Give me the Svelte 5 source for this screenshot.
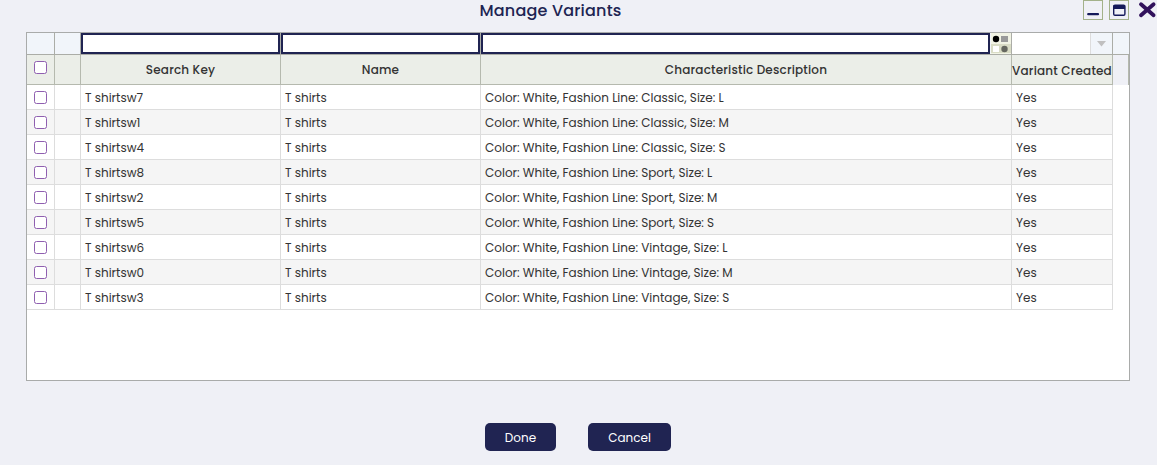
<script>
  const rows = [
    ['7', 'Classic', 'L'],
    ['1', 'Classic', 'M'],
    ['4', 'Classic', 'S'],
    ['8', 'Sport', 'L'],
    ['2', 'Sport', 'M'],
    ['5', 'Sport', 'S'],
    ['6', 'Vintage', 'L'],
    ['0', 'Vintage', 'M'],
    ['3', 'Vintage', 'S']
  ];
</script>

<div class="dialog">
  <header>
    <h1>Manage Variants</h1>
    <div class="controls">
      <button class="box" aria-label="Minimize">
        <svg width="18" height="18" viewBox="0 0 18 18"><path d="M4.2 13.2h9.8" stroke="#14195a" stroke-width="2.2" stroke-linecap="round" /></svg>
      </button>
      <button class="box" aria-label="Maximize">
        <svg width="18" height="18" viewBox="0 0 18 18"><rect x="3.7" y="4.2" width="11.2" height="10" rx="1.3" fill="#eff0f6" stroke="#14195a" stroke-width="1.4" /><path d="M3.5 4h11.6v4h-11.6z" fill="#14195a" /></svg>
      </button>
      <button class="close" aria-label="Close">
        <svg width="20" height="20" viewBox="0 0 20 20"><path d="M4 4.2L16.6 15.2M16.6 4.2L4 15.2" stroke="#32125c" stroke-width="3.8" stroke-linecap="round" /></svg>
      </button>
    </div>
  </header>

  <div class="grid">
    <div class="line filters">
      <div></div>
      <div></div>
      <div><span class="input"></span></div>
      <div><span class="input"></span></div>
      <div>
        <span class="input"></span>
        <svg class="picker" width="21" height="21" viewBox="0 0 21 21">
          <rect x="1" width="20" height="21" fill="#f1f3e4" />
          <rect x="1" y="11" width="20" height="9" fill="#d9dcc5" />
          <circle cx="6" cy="6" r="3.2" fill="#000" />
          <rect x="11" y="3" width="7" height="6" fill="#999" />
          <rect x="3" y="13" width="6" height="6" fill="#fff" />
          <circle cx="14.5" cy="16" r="3.2" fill="#65675f" />
        </svg>
      </div>
      <div>
        <span class="select"></span>
        <svg class="arrow" width="21" height="21" viewBox="0 0 21 21"><path d="M6 8h9l-4.5 5.5z" fill="#c0c0c0" /></svg>
      </div>
      <div class="edge"></div>
    </div>

    <div class="line heads">
      <div class="check"><i></i></div>
      <div></div>
      <div><b>Search Key</b></div>
      <div><b>Name</b></div>
      <div><b>Characteristic Description</b></div>
      <div><b class="last">Variant Created</b></div>
      <div class="edge"></div>
    </div>

    {#each rows as [n, style, size]}
      <div class="line row">
        <div class="check"><i></i></div>
        <div></div>
        <div>T shirtsw{n}</div>
        <div>T shirts</div>
        <div>Color: White, Fashion Line: {style}, Size: {size}</div>
        <div>Yes</div>
      </div>
    {/each}
  </div>

  <footer>
    <button class="done">Done</button>
    <button class="cancel">Cancel</button>
  </footer>
</div>

<style>
  :global(body) { background: #eff0f6; overflow: hidden; }
  .dialog {
    box-sizing: border-box;
    width: 1157px;
    height: 465px;
    background: #eff0f6;
    font-family: Poppins, Inter, sans-serif;
    font-size: 12px;
    color: #333;
  }
  button { border: 0; padding: 0; background: none; font: inherit; }
  svg { display: block; flex: none; }
  header { display: grid; grid-template-columns: 1083px 74px; height: 32px; }
  h1 {
    margin: 0;
    padding-left: 18px;
    text-align: center;
    font-size: 16px;
    font-weight: 500;
    line-height: 21px;
    color: #202452;
    letter-spacing: 0.2px;
  }
  .controls { display: flex; align-items: flex-start; }
  .box { width: 20px; height: 20px; box-sizing: border-box; border: 1px solid #a3b18a; margin-right: 6px; }
  .close { width: 20px; height: 20px; margin-left: 2px; flex: none; }
  .grid {
    box-sizing: border-box;
    width: 1104px;
    height: 349px;
    margin-left: 26px;
    border: 1px solid #a9abaa;
    background: #fff;
  }
  .line { display: grid; grid-template-columns: 28px 26px 200px 200px 531px 101px 16px; }
  .line > div {
    box-sizing: border-box;
    display: flex;
    align-items: center;
    min-width: 0;
    border-right: 1px solid #ddd;
    border-bottom: 1px solid #ddd;
    white-space: nowrap;
  }
  .filters { height: 22px; }
  .filters > div { background: #f1f5fa; border-color: #abada7; }
  .filters > .edge { border-right: 0; }
  .input { box-sizing: border-box; flex: 1; height: 21px; border: 2px solid #202452; background: #fff; }
  .select { flex: 1; height: 21px; background: #fff; border-right: 1px solid #ddd; }
  .heads { height: 30px; }
  .heads > div { background: #ebeee8; border-color: #b5b9ae; justify-content: center; }
  .heads > .edge { background: #eff0f6; border-bottom: 0; }
  .row { height: 25px; }
  .row:nth-child(even) > div { background: #f5f5f5; }
  .row > div { padding: 2px 0 0 4px; }
  .row > .check { padding: 0; }
  .check { justify-content: center; }
  .check i { box-sizing: border-box; width: 13px; height: 13px; border: 1px solid #8f5fb0; border-radius: 2.5px; background: #fff; }
  .heads .check i { margin-bottom: 4px; }
  b { font-weight: 500; letter-spacing: 0.18px; }
  .last { padding-top: 2px; }
  .done, .cancel {
    height: 28px;
    border-radius: 5px;
    background: #202452;
    color: #fff;
    line-height: 30px;
  }
  .done { width: 71px; }
  .cancel { width: 83px; }
  footer { display: flex; gap: 32px; padding: 42px 0 0 485px; }
</style>
